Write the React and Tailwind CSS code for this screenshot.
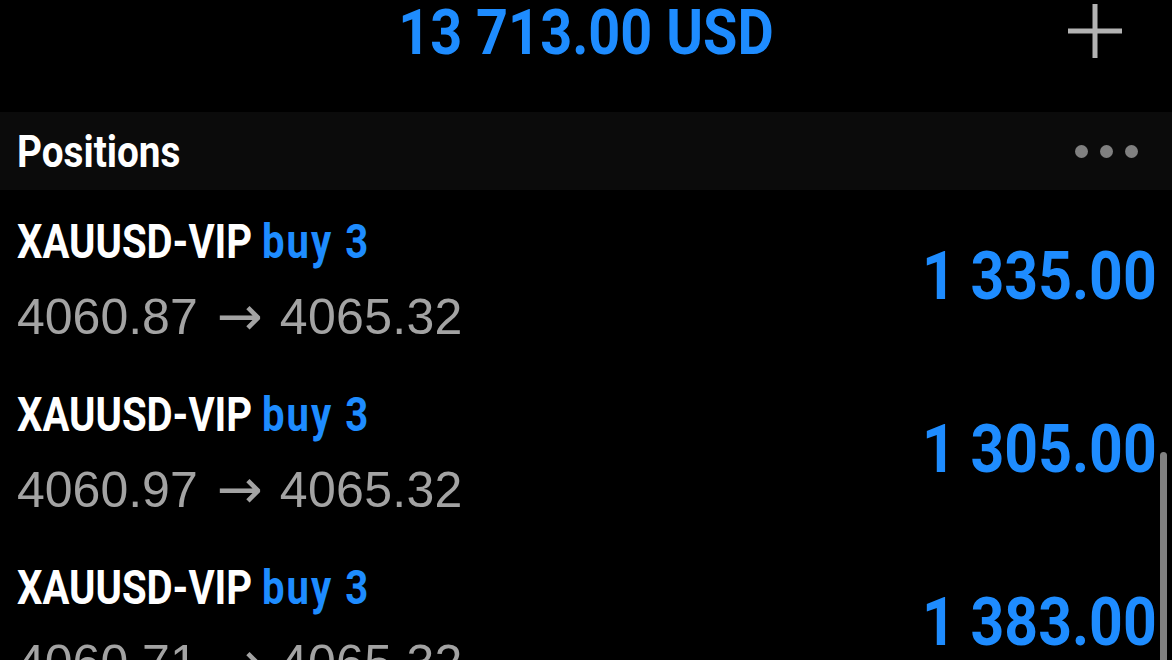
import React from 'react'

// narrow condensed look: Roboto squeezed horizontally
const COND = { fontFamily: 'Roboto, "Liberation Sans", sans-serif' }
const PRICE = { fontFamily: '"Liberation Sans", Arial, sans-serif' }

const positions = [
    { symbol: 'XAUUSD-VIP', side: 'buy 3', open: '4060.87', current: '4065.32', profit: '1 335.00' },
    { symbol: 'XAUUSD-VIP', side: 'buy 3', open: '4060.97', current: '4065.32', profit: '1 305.00' },
    { symbol: 'XAUUSD-VIP', side: 'buy 3', open: '4060.71', current: '4065.32', profit: '1 383.00' },
]

function PositionRow({ item }) {
    return (
        <div className="flex h-[173px] shrink-0 items-center justify-between pl-[17px] pr-[15px]">
            <div className="flex flex-col self-start pt-[27px]">
                <div className="flex origin-left scale-x-[0.818] items-baseline gap-[12px] text-[49px] leading-none font-bold whitespace-nowrap" style={COND}>
                    <span className="text-white">{item.symbol}</span>
                    <span className="tracking-[2.5px] text-[#1e8cff]">{item.side}</span>
                </div>
                <div className="mt-[23px] flex items-center text-[50px] leading-none whitespace-nowrap text-[#a3a3a3]" style={PRICE}>
                    <span>{item.open}</span>
                    <span className="ml-[19px] mr-[17px] text-[55px]" style={{ fontFamily: '"DejaVu Sans", sans-serif' }}>→</span>
                    <span className="tracking-[0.3px]">{item.current}</span>
                </div>
            </div>
            <div className="origin-right scale-x-[0.88] text-[67px] leading-none font-bold whitespace-nowrap text-[#1e8cff]" style={COND}>
                {item.profit}
            </div>
        </div>
    )
}

export default function App() {
    return (
        <div className="relative h-[660px] w-[1172px] overflow-hidden bg-black">
            <div className="relative flex h-[112px] items-start justify-center pt-[1px]">
                <div className="scale-x-[0.886] text-[63px] leading-none font-bold whitespace-nowrap text-[#1e8cff]" style={COND}>
                    13 713.00 USD
                </div>
                <svg className="absolute right-[50px] top-[4px]" width="54" height="54" viewBox="0 0 54 54">
                    <path d="M27 0V54M0 27H54" stroke="#b3b3b3" strokeWidth="5" />
                </svg>
            </div>
            <div className="flex h-[78px] items-center justify-between bg-[#0b0b0b] pl-[17px] pr-[34px]">
                <span className="origin-left scale-x-[0.86] text-[45px] leading-none font-bold text-white" style={COND}>Positions</span>
                <div className="flex gap-[12px]">
                    <span className="h-[13px] w-[13px] rounded-full bg-[#808080]" />
                    <span className="h-[13px] w-[13px] rounded-full bg-[#808080]" />
                    <span className="h-[13px] w-[13px] rounded-full bg-[#808080]" />
                </div>
            </div>
            <div className="flex flex-col">
                {positions.map((p, i) => (
                    <PositionRow key={i} item={p} />
                ))}
            </div>
            <div className="absolute right-[5px] top-[452px] h-[220px] w-[7px] rounded-full bg-[#808080]" />
        </div>
    )
}
